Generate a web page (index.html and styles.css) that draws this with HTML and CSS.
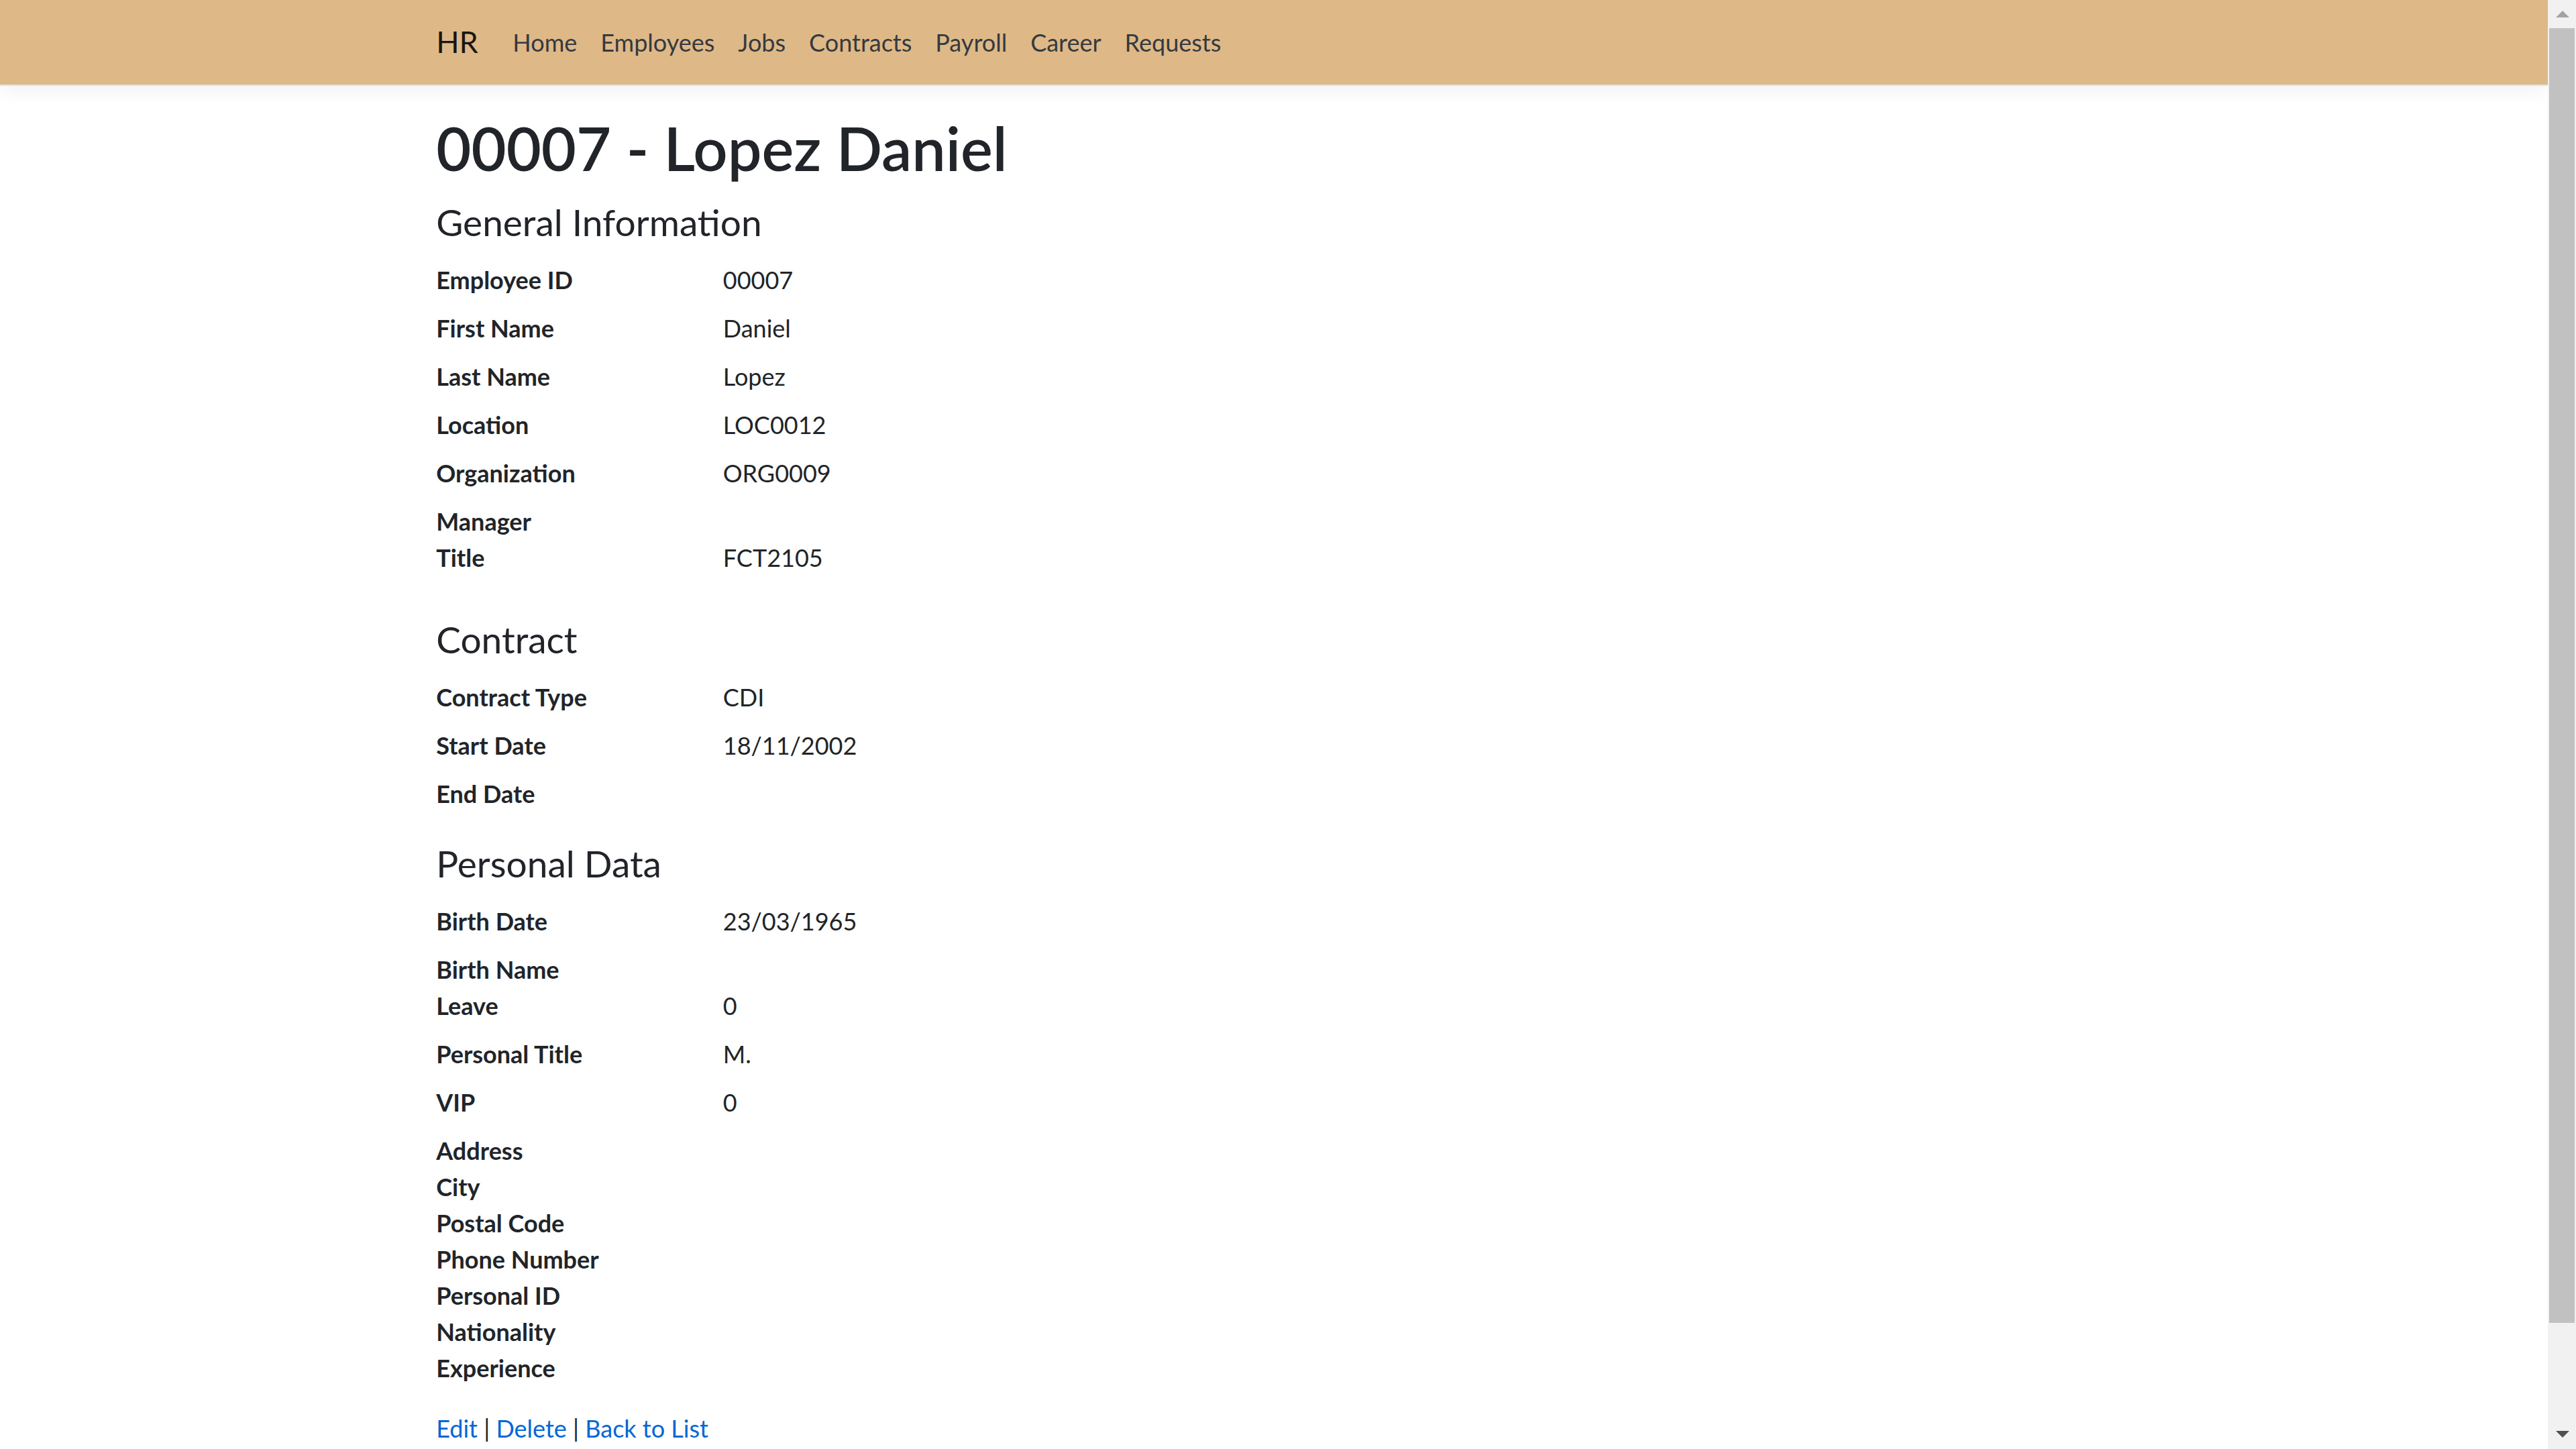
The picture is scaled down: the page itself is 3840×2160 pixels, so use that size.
FILE: index.html
```html
<!DOCTYPE html>
<html lang="en">
<head>
<meta charset="utf-8">
<title>00007 - Lopez Daniel - HR</title>
<link rel="stylesheet" href="styles.css">
</head>
<body>
<div class="viewport">
  <div class="page">
    <header class="site-header">
      <nav class="navbar">
        <div class="container nav-inner">
          <a class="brand" href="#">HR</a>
          <ul class="nav">
            <li><a class="nav-link" href="#">Home</a></li>
            <li><a class="nav-link" href="#">Employees</a></li>
            <li><a class="nav-link" href="#">Jobs</a></li>
            <li><a class="nav-link" href="#">Contracts</a></li>
            <li><a class="nav-link" href="#">Payroll</a></li>
            <li><a class="nav-link" href="#">Career</a></li>
            <li><a class="nav-link" href="#">Requests</a></li>
          </ul>
        </div>
      </nav>
    </header>
    <div class="container">
      <main class="main">
        <h1 class="title">00007 - Lopez Daniel</h1>

        <section>
          <h3 class="section-title">General Information</h3>
          <dl class="details">
            <dt>Employee ID</dt><dd>00007</dd>
            <dt>First Name</dt><dd>Daniel</dd>
            <dt>Last Name</dt><dd>Lopez</dd>
            <dt>Location</dt><dd>LOC0012</dd>
            <dt>Organization</dt><dd>ORG0009</dd>
            <dt>Manager</dt><dd></dd>
            <dt>Title</dt><dd>FCT2105</dd>
          </dl>
        </section>

        <section>
          <h3 class="section-title">Contract</h3>
          <dl class="details">
            <dt>Contract Type</dt><dd>CDI</dd>
            <dt>Start Date</dt><dd>18/11/2002</dd>
            <dt>End Date</dt><dd></dd>
          </dl>
        </section>

        <section>
          <h3 class="section-title">Personal Data</h3>
          <dl class="details">
            <dt>Birth Date</dt><dd>23/03/1965</dd>
            <dt>Birth Name</dt><dd></dd>
            <dt>Leave</dt><dd>0</dd>
            <dt>Personal Title</dt><dd>M.</dd>
            <dt>VIP</dt><dd>0</dd>
            <dt>Address</dt><dd></dd>
            <dt>City</dt><dd></dd>
            <dt>Postal Code</dt><dd></dd>
            <dt>Phone Number</dt><dd></dd>
            <dt>Personal ID</dt><dd></dd>
            <dt>Nationality</dt><dd></dd>
            <dt>Experience</dt><dd></dd>
          </dl>
        </section>

        <div class="actions">
          <a href="#">Edit</a> | <a href="#">Delete</a> | <a href="#">Back to List</a>
        </div>
      </main>
    </div>
  </div>
  <div class="scrollbar" aria-hidden="true">
    <div class="sb-button sb-up"><span class="tri-up"></span></div>
    <div class="sb-thumb"></div>
    <div class="sb-track"></div>
    <div class="sb-button sb-down"><span class="tri-down"></span></div>
  </div>
</div>
</body>
</html>
```

FILE: styles.css
```css
html, body {
  margin: 0;
  padding: 0;
}

body {
  font-family: "Lato", "Open Sans", sans-serif;
  font-size: 36px;
  line-height: 54px;
  color: #212529;
  background: #ffffff;
  overflow: hidden;
}

.viewport {
  display: flex;
  height: 2160px;
  width: 3840px;
}

.page {
  flex: 1;
  min-width: 0;
  overflow: hidden;
  background: #ffffff;
}

.container {
  max-width: 2565px;
  margin: 0 auto;
  padding: 0 33.75px;
  box-sizing: border-box;
  width: 2565px;
}

/* Navbar */
.site-header {
  margin-bottom: 36px;
}

.navbar {
  background: #deb887;
  padding: 18px 36px;
  border-bottom: 2px solid #dee2e6;
  box-shadow: 0 9px 27px rgba(0, 0, 0, 0.05);
}

.nav-inner {
  display: flex;
  align-items: center;
  padding-left: 33.75px;
}

.brand {
  font-size: 45px;
  line-height: 67.5px;
  padding: 11.25px 0;
  margin-right: 34px;
  color: rgba(0, 0, 0, 0.9);
  text-decoration: none;
}

.nav {
  display: flex;
  list-style: none;
  margin: 0;
  padding: 0;
}

.nav-link {
  display: block;
  padding: 18px 17.5px;
  line-height: 54px;
  color: #343a40;
  text-decoration: none;
}

/* Main content */
.main {
  padding-bottom: 36px;
}

.title {
  font-size: 90px;
  line-height: 112px;
  font-weight: 600;
  margin: 0 0 14px;
}

.section-title {
  font-size: 55px;
  line-height: 82px;
  font-weight: 400;
  margin: 0 0 18px;
}

.details {
  display: grid;
  grid-template-columns: 427.5px 1fr;
  margin: 0 0 36px;
}

.details dt {
  font-weight: 700;
  line-height: 54px;
}

.details dd {
  margin: 0 0 18px;
  line-height: 54px;
}

.actions {
  line-height: 54px;
}

.actions a {
  color: #0366d6;
  text-decoration: none;
}

/* Scrollbar */
.scrollbar {
  width: 42px;
  height: 2160px;
  background: #f1f1f1;
  display: flex;
  flex-direction: column;
}

.sb-button {
  display: flex;
  align-items: center;
  justify-content: center;
  padding-left: 2px;
}

.sb-up {
  height: 42px;
}

.sb-down {
  height: 44px;
}

.sb-thumb {
  height: 1930px;
  margin-left: 2px;
  width: 38px;
  background: #c1c1c1;
}

.sb-track {
  flex: 1;
}

.tri-up {
  width: 0;
  height: 0;
  border-left: 10px solid transparent;
  border-right: 10px solid transparent;
  border-bottom: 10px solid #a3a3a3;
}

.tri-down {
  width: 0;
  height: 0;
  border-left: 10px solid transparent;
  border-right: 10px solid transparent;
  border-top: 10px solid #505050;
}
```
